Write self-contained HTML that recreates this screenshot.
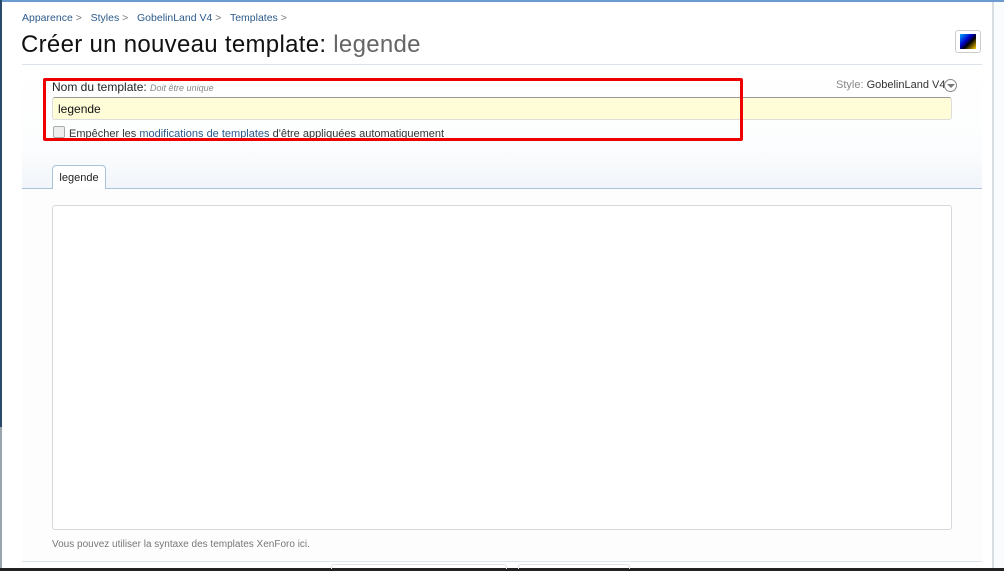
<!DOCTYPE html>
<html><head><meta charset="utf-8"><style>
*{margin:0;padding:0;box-sizing:border-box}
body{width:1004px;height:571px;overflow:hidden;background:#fff;font-family:"Liberation Sans",sans-serif;position:relative}
.a{position:absolute}
</style></head><body>
<div class="a" style="left:0;top:0;width:1004px;height:2px;background:#6b9bd0"></div>
<div class="a" style="left:0;top:0;width:2px;height:427px;background:#2b4a6a"></div>
<div class="a" style="left:0;top:427px;width:2px;height:144px;background:#9aa4ad"></div>
<div class="a" style="left:992px;top:2px;width:2px;height:569px;background:#d8dde2"></div>
<div class="a" style="left:994px;top:2px;width:10px;height:569px;background:#fafbfc"></div>
<div class="a" style="left:0;top:568px;width:1004px;height:3px;background:#222"></div>
<div class="a" style="left:22px;top:12px;font-size:10.5px;color:#2b5a8a;white-space:nowrap">Apparence <span style="color:#777">&gt;</span>&nbsp;&nbsp; Styles <span style="color:#777">&gt;</span>&nbsp;&nbsp; GobelinLand V4 <span style="color:#777">&gt;</span>&nbsp;&nbsp; Templates <span style="color:#777">&gt;</span></div>
<div class="a" style="left:21px;top:31px;font-size:24px;color:#111;white-space:nowrap;letter-spacing:0.3px">Créer un nouveau template: <span style="color:#666">legende</span></div>
<div class="a" style="left:955px;top:30px;width:26px;height:23px;border:1px solid #ccc;border-radius:3px;background:#fff"><div style="margin:3px 4px;width:16px;height:15px;background:linear-gradient(135deg,#0af 0%,#00c 40%,#000 60%,#fc0 100%)"></div></div>
<div class="a" style="left:22px;top:64px;width:960px;height:1px;background:#dde3ea"></div>
<div class="a" style="left:22px;top:65px;width:960px;height:123px;background:linear-gradient(#fff 0,#fcfdfe 85px,#f1f5f9 123px)"></div>
<div class="a" style="left:22px;top:189px;width:960px;height:372px;background:#fdfdfe"></div>
<div class="a" style="left:52px;top:80px;font-size:12px;color:#222;white-space:nowrap">Nom du template: <i style="font-size:9px;color:#888">Doit être unique</i></div>
<div class="a" style="left:836px;top:79px;font-size:11px;color:#888;white-space:nowrap">Style: <span style="color:#333">GobelinLand V4</span></div>
<div class="a" style="left:944px;top:79px;width:13px;height:13px;border:1px solid #888;border-radius:50%;background:#fff"><div style="margin:4px 0 0 2px;width:0;height:0;border-left:4px solid transparent;border-right:4px solid transparent;border-top:4px solid #777"></div></div>
<div class="a" style="left:52px;top:97px;width:900px;height:23px;background:#fffcd8;border:1px solid #ddd;border-top-color:#999;border-radius:3px;font-size:12px;padding:4px 5px;color:#111">legende</div>
<div class="a" style="left:53px;top:126px;width:12px;height:12px;border:1px solid #aaa;border-radius:2px;background:#eee"></div>
<div class="a" style="left:69px;top:128px;font-size:11px;color:#333;white-space:nowrap">Empêcher les <span style="color:#2b5a8a">modifications de templates</span> d'être appliquées automatiquement</div>
<div class="a" style="left:43px;top:78px;width:700px;height:63px;border:3px solid #e00;border-radius:2px"></div>
<div class="a" style="left:22px;top:188px;width:960px;height:1px;background:#a9c3dc"></div>
<div class="a" style="left:52px;top:165px;width:54px;height:24px;background:#fff;border:1px solid #a9c3dc;border-bottom:none;border-radius:4px 4px 0 0;font-size:11px;color:#222;text-align:center;padding-top:6px">legende</div>
<div class="a" style="left:52px;top:205px;width:900px;height:325px;background:#fff;border:1px solid #d5d9de;border-radius:3px"></div>
<div class="a" style="left:52px;top:539px;font-size:10px;color:#777;white-space:nowrap">Vous pouvez utiliser la syntaxe des templates XenForo ici.</div>
<div class="a" style="left:22px;top:561px;width:960px;height:1px;background:#dde3ea"></div>
<div class="a" style="left:331px;top:564px;width:176px;height:5px;border:1px solid #e2e2e2;border-bottom:none;border-radius:3px 3px 0 0"></div>
<div class="a" style="left:518px;top:564px;width:112px;height:5px;border:1px solid #e2e2e2;border-bottom:none;border-radius:3px 3px 0 0"></div>
</body></html>
